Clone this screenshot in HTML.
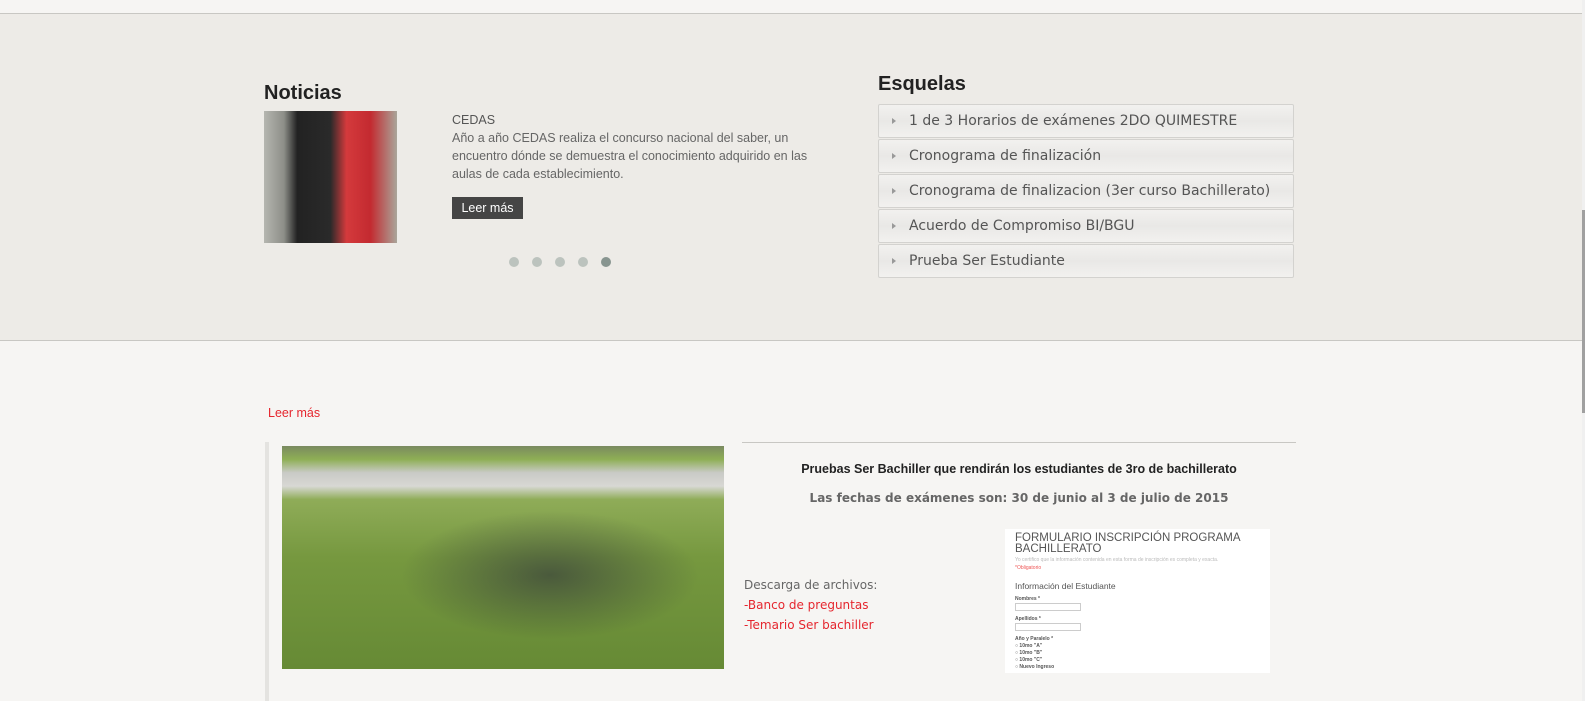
<!DOCTYPE html>
<html><head><meta charset="utf-8"><style>
body{margin:0;width:1585px;height:701px;overflow:hidden;background:#f6f5f3;font-family:"Liberation Sans",sans-serif;position:relative}
.a{position:absolute}
.top{left:0;top:0;width:1582px;height:13px;background:#f6f5f3;border-bottom:1px solid #c8c7c3}
.band{left:0;top:14px;width:1582px;height:326px;background:#edebe7;border-bottom:1px solid #c8c7c3}
h2{margin:0;font-size:20px;color:#222;font-weight:bold}
.item{left:878px;width:414px;height:32px;border:1px solid #d3d2cf;border-radius:2px;background:linear-gradient(#f2f1ef,#e9e8e6 50%,#f2f1ef);font-family:"DejaVu Sans",sans-serif;font-size:14px;color:#555;line-height:32px}
.item span.t{position:absolute;left:30px}
.item span.c{position:absolute;left:13px;top:13px;border-left:4px solid #999;border-top:3px solid transparent;border-bottom:3px solid transparent}
.dot{top:257px;width:10px;height:10px;border-radius:50%;background:#bcc3be}
</style></head><body>
<div class="a top"></div>
<div class="a band"></div>
<div class="a" style="right:0;top:0;width:3px;height:701px;background:#f0f0f0"></div>
<div class="a" style="right:0;top:210px;width:3px;height:203px;background:#a0a0a0"></div>
<h2 class="a" style="left:264px;top:82px">Noticias</h2>
<div class="a" style="left:264px;top:111px;width:133px;height:132px;background:linear-gradient(90deg,#b5b6b0 0,#8d8e88 15%,#222 25%,#2a2a2a 50%,#d43a3c 62%,#c32a30 80%,#a9a59a 100%)"></div>
<div class="a" style="left:452px;top:111px;width:380px;font-size:12.5px;line-height:18px;color:#666"><span style="color:#555">CEDAS</span><br>Año a año CEDAS realiza el concurso nacional del saber, un encuentro dónde se demuestra el conocimiento adquirido en las aulas de cada establecimiento.</div>
<div class="a" style="left:452px;top:197px;width:71px;height:22px;background:#454545;color:#fff;font-size:12.5px;line-height:22px;text-align:center">Leer más</div>
<div class="a dot" style="left:509px"></div><div class="a dot" style="left:532px"></div><div class="a dot" style="left:555px"></div><div class="a dot" style="left:578px"></div><div class="a dot" style="left:601px;background:#889590"></div>
<h2 class="a" style="left:878px;top:73px">Esquelas</h2>
<div class="a item" style="top:104px"><span class="c"></span><span class="t">1 de 3 Horarios de exámenes 2DO QUIMESTRE</span></div>
<div class="a item" style="top:139px"><span class="c"></span><span class="t">Cronograma de finalización</span></div>
<div class="a item" style="top:174px"><span class="c"></span><span class="t">Cronograma de finalizacion (3er curso Bachillerato)</span></div>
<div class="a item" style="top:209px"><span class="c"></span><span class="t">Acuerdo de Compromiso BI/BGU</span></div>
<div class="a item" style="top:244px"><span class="c"></span><span class="t">Prueba Ser Estudiante</span></div>
<div class="a" style="left:268px;top:406px;font-size:12.5px;color:#e5262e">Leer más</div>
<div class="a" style="left:265px;top:442px;width:4px;height:259px;background:#e4e3e0"></div>
<div class="a" style="left:282px;top:446px;width:442px;height:223px;background:linear-gradient(#7a8a60 0,#8eaf55 6%,#c9cac6 12%,#d8d8d4 18%,#8fac58 24%,#76983f 50%,#668a35 100%)"></div>
<div class="a" style="left:400px;top:510px;width:300px;height:130px;background:radial-gradient(ellipse at 50% 50%,rgba(40,40,60,.55),rgba(40,40,60,0) 70%)"></div>
<div class="a" style="left:742px;top:442px;width:554px;height:1px;background:#c8c7c3"></div>
<div class="a" style="left:742px;top:462px;width:554px;text-align:center;font-size:12.5px;font-weight:bold;color:#222">Pruebas Ser Bachiller que rendirán los estudiantes de 3ro de bachillerato</div>
<div class="a" style="left:742px;top:491px;width:554px;text-align:center;font-size:12px;font-weight:bold;color:#666;font-family:'DejaVu Sans',sans-serif">Las fechas de exámenes son: 30 de junio al 3 de julio de 2015</div>
<div class="a" style="left:744px;top:575px;font-size:12px;line-height:20px;color:#666;font-family:'DejaVu Sans',sans-serif">Descarga de archivos:<br><span style="color:#e5262e">-Banco de preguntas</span><br><span style="color:#e5262e">-Temario Ser bachiller</span></div>
<div class="a" style="left:1005px;top:529px;width:265px;height:144px;background:#fff;font-size:6px;color:#888">
<div style="position:absolute;left:10px;top:4px;font-size:11.5px;line-height:11px;color:#555">FORMULARIO INSCRIPCIÓN PROGRAMA BACHILLERATO</div>
<div style="position:absolute;left:10px;top:28px;color:#bbb;font-size:5px">Yo certifico que la información contenida en esta forma de inscripción es completa y exacta.</div>
<div style="position:absolute;left:10px;top:36px;color:#e55;font-size:5px">*Obligatorio</div>
<div style="position:absolute;left:10px;top:52px;font-size:8.5px;color:#555">Información del Estudiante</div>
<div style="position:absolute;left:10px;top:67px;font-size:5px;color:#555;font-weight:bold">Nombres *</div>
<div style="position:absolute;left:10px;top:74px;width:64px;height:6px;border:1px solid #ccc"></div>
<div style="position:absolute;left:10px;top:87px;font-size:5px;color:#555;font-weight:bold">Apellidos *</div>
<div style="position:absolute;left:10px;top:94px;width:64px;height:6px;border:1px solid #ccc"></div>
<div style="position:absolute;left:10px;top:107px;font-size:5px;color:#555;font-weight:bold;line-height:7px">Año y Paralelo *<br>○ 10mo "A"<br>○ 10mo "B"<br>○ 10mo "C"<br>○ Nuevo Ingreso</div>
</div>
</body></html>
